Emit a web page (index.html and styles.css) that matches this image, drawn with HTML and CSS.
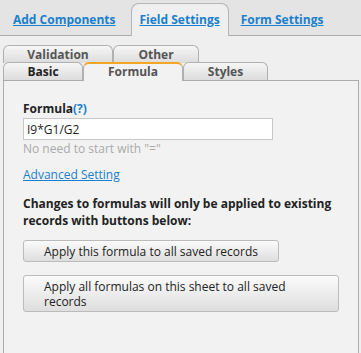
FILE: index.html
```html
<!DOCTYPE html>
<html lang="en">
<head>
  <meta charset="UTF-8" />
  <title>Field Settings</title>
  <link rel="stylesheet" href="styles.css">
</head>
<body>
  <nav class="main-tabs">
    <a href="#" class="main-tab">Add Components</a>
    <a href="#" class="main-tab active">Field Settings</a>
    <a href="#" class="main-tab">Form Settings</a>
  </nav>

  <div class="settings">
    <div class="sub-tabs">
      <div class="tab-row">
        <span class="sub-tab">Validation</span>
        <span class="sub-tab">Other</span>
      </div>
      <div class="tab-row">
        <span class="sub-tab dark">Basic</span>
        <span class="sub-tab active">Formula</span>
        <span class="sub-tab">Styles</span>
      </div>
    </div>

    <div class="panel">
      <label class="field-label">Formula<a href="#">(?)</a></label>
      <input class="formula-input" type="text" value="I9*G1/G2">
      <p class="hint">No need to start with "="</p>
      <a href="#" class="advanced">Advanced Setting</a>
      <p class="notice">Changes to formulas will only be applied to existing records with buttons below:</p>
      <button class="apply-btn short">Apply this formula to all saved records</button>
      <button class="apply-btn wide">Apply all formulas on this sheet to all saved records</button>
    </div>
  </div>
</body>
</html>
```

FILE: styles.css
```css
/* Geral */
body {
  margin: 0; font-family: 'Open Sans', sans-serif; font-size: 12px; color: #222;
  background-color: #efefef; height: 100vh; overflow: hidden; display: flex; flex-direction: column;
}
a { color: #1a7fcc; }

/* Abas principais */
.main-tabs {
  display: flex; align-items: flex-end; height: 35px; flex-shrink: 0; background-color: #e4e4e4;
  border-bottom: 1px solid #acacac; padding-left: 13px;
}
.main-tab {
  font-weight: bold; font-size: 12px; line-height: 16px; padding: 0 0 7px; white-space: nowrap;
  text-decoration: underline;
}
.main-tab.active {
  background-color: #efefef; border: 1px solid #b5b5b5; border-bottom: none;
  border-radius: 8px 8px 0 0; margin: 0 12px -1px 15px; padding: 8px 8px 8px;
}

/* Sub-abas */
.settings { flex: 1; display: flex; flex-direction: column; padding: 9px 2px 0 3px; }
.tab-row { display: flex; height: 17px; }
.tab-row + .tab-row { height: 18px; }
.sub-tab {
  box-sizing: border-box; height: 18px; width: 110px; text-align: center;
  font-weight: bold; font-size: 12px; color: #555; line-height: 17px;
  border: 1px solid #b0b0b0; border-bottom: none; border-radius: 6px 6px 0 0;
  background: linear-gradient(#f6f6f6, #dcdcdc);
}
.tab-row:first-child .sub-tab:nth-child(2) { width: 86px; }
.tab-row + .tab-row .sub-tab { width: 80px; }
.tab-row + .tab-row .sub-tab.active { width: 100px; }
.tab-row + .tab-row .sub-tab:last-child { width: 85px; }
.sub-tab.dark { color: #222; }
.sub-tab.active {
  background: #f2f2f2; border-top: 2px solid #f5a623; line-height: 15px;
  height: 19px; position: relative; z-index: 1;
}

/* Painel */
.panel {
  flex: 1; border: 1px solid #acacac; border-bottom: none; background-color: #f2f2f2;
  padding: 20px 19px 0;
}
.field-label { display: block; font-weight: bold; font-size: 12px; line-height: 16px; }
.field-label a { text-decoration: none; }
.formula-input {
  display: block; box-sizing: border-box; width: 250px; height: 22px; margin-top: 1px;
  border: 1px solid #c8c8c8; background: white; padding: 0 3px;
  font-family: 'Open Sans', sans-serif; font-size: 12px; color: #222;
}
.hint { margin: 1px 0 0; color: #aaa; line-height: 16px; }
.advanced { display: block; width: max-content; margin-top: 10px; line-height: 16px; }
.notice { margin: 12px 0 11px; font-weight: bold; line-height: 17px; }
.apply-btn {
  display: block; box-sizing: border-box; text-align: left; padding: 0 20px;
  font-family: 'Open Sans', sans-serif; font-size: 12px; color: #222;
  border: 1px solid #bbb; border-radius: 3px; background: linear-gradient(#fbfbfb, #dedede);
  margin-bottom: 13px; line-height: 15px;
}
.apply-btn.short { width: 256px; height: 22px; }
.apply-btn.wide { width: 316px; height: 37px; }
```
